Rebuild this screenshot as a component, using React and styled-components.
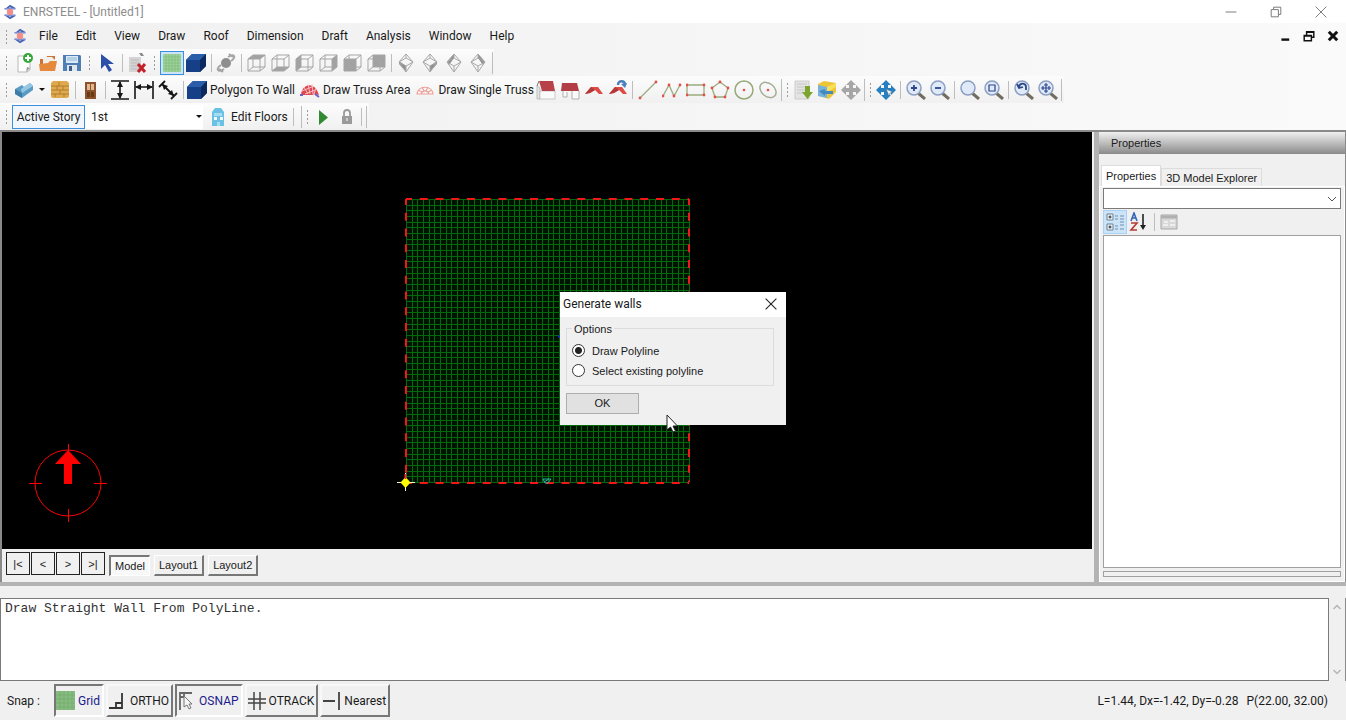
import React, { useState } from 'react';
import styled, { createGlobalStyle } from 'styled-components';

const MENUS = ['File', 'Edit', 'View', 'Draw', 'Roof', 'Dimension', 'Draft', 'Analysis', 'Window', 'Help'];

const CUBE_FACES = [
  ['Top view', '2,6 7,2 19,2 14,6'],
  ['Bottom view', '2,18 7,14 19,14 14,18'],
  ['Left view', '2,6 7,2 7,14 2,18'],
  ['Right view', '14,6 19,2 19,14 14,18'],
  ['Front view', '2,6 14,6 14,18 2,18'],
  ['Back view', '7,2 19,2 19,14 7,14'],
];

const ISO_FACES = [
  ['South west view', '3,8 10,13 10,19 3,11'],
  ['South east view', '17,8 10,13 10,19 17,11'],
  ['North west view', '3,9 10,1 10,5 5,12'],
  ['North east view', '17,9 10,1 10,5 15,12'],
];

const GRID_START = 9;
const GRID_SIZE = 283;
const GRID_CELLS = 50;

export default function App() {
  const [option, setOption] = useState('draw');

  return (
    <WindowStyled>
      <GlobalStyle />
      <TitleBarStyled>
        <LogoIcon />
        <TitleStyled>ENRSTEEL - [Untitled1]</TitleStyled>
        <CaptionButtonStyled aria-label="Minimize">
          <Icon size={12}>
            <path d="M1 10h18" stroke="#777" strokeWidth="1.6" />
          </Icon>
        </CaptionButtonStyled>
        <CaptionButtonStyled aria-label="Restore">
          <Icon size={12}>
            <path d="M2 6h12v12H2zM6 6V2h12v12h-4" fill="none" stroke="#777" strokeWidth="1.6" />
          </Icon>
        </CaptionButtonStyled>
        <CaptionButtonStyled aria-label="Close">
          <Icon size={12}>
            <path d="M1 1l18 18M19 1L1 19" stroke="#777" strokeWidth="1.6" />
          </Icon>
        </CaptionButtonStyled>
      </TitleBarStyled>

      <MenuBarStyled>
        <GripStyled />
        <LogoIcon />
        <MenuItemsStyled>
          {MENUS.map((menu) => (
            <MenuButtonStyled key={menu}>{menu}</MenuButtonStyled>
          ))}
        </MenuItemsStyled>
        <ChildButtonStyled aria-label="Minimize drawing">
          <Icon size={12}>
            <path d="M4 16h13" stroke="#111" strokeWidth="4" />
          </Icon>
        </ChildButtonStyled>
        <ChildButtonStyled aria-label="Restore drawing">
          <Icon size={12}>
            <path d="M2 9h12v9H2zM6 9V3h12v9h-4M2 10h12M6 4h12" fill="none" stroke="#111" strokeWidth="2.4" />
          </Icon>
        </ChildButtonStyled>
        <ChildButtonStyled aria-label="Close drawing">
          <Icon size={12}>
            <path d="M3 3l14 14M17 3L3 17" stroke="#111" strokeWidth="5" />
          </Icon>
        </ChildButtonStyled>
      </MenuBarStyled>

      <ToolbarRowStyled>
        <ToolbarStyled>
          <GripStyled />
          <Tool label="New">
            <path d="M4 3h9l3 4v10l-3 2H4z" fill="#fdfdfd" stroke="#b8b8b8" />
            <path d="M12 19l1-5 3 1z" fill="#999" />
            <circle cx="14" cy="5" r="5" fill="#35a83a" />
            <path d="M14 2v6M11 5h6" stroke="#fff" strokeWidth="2" />
          </Tool>
          <Tool label="Open">
            <path d="M2 6h6l1-3h8v12H2z" fill="#c9743d" />
            <path d="M5 4h9l3 3v5H5z" fill="#f3efe9" />
            <path d="M1 11l9-1 2-2h7l-2 10H2z" fill="#e58a3c" />
          </Tool>
          <Tool label="Save">
            <path d="M1 2h17l1 1v15H1z" fill="#4f7eb5" />
            <path d="M4 3h12v7H4z" fill="#d9ebf7" />
            <path d="M5 5h10M5 7h10" stroke="#8bb5d5" />
            <path d="M5 12h10v6H5z" fill="#dfe6ec" />
            <path d="M7 13h3v5H7z" fill="#3a5f8e" />
          </Tool>
          <GripStyled $width={11} />
          <Tool label="Select">
            <path d="M4 1v15l4-4 4 7 3-2-4-6h6z" fill="#2c4fa8" />
          </Tool>
          <SeparatorStyled />
          <Tool label="Delete">
            <path d="M2 4h12v15H2z" fill="#d4d4d4" />
            <path d="M4 7h8M4 10h8M4 13h8M4 16h8" stroke="#bbb" />
            <path d="M12 0h3l2 3h-3z" fill="#888" />
            <path d="M11 11l7 8M18 11l-7 8" stroke="#c4202a" strokeWidth="3" />
          </Tool>
          <GripStyled $width={11} />
          <Tool label="Grid" active>
            <path d="M1 1h18v18H1z" fill="#9fd39b" />
            <path d="M4 1v18M7 1v18M10 1v18M13 1v18M16 1v18M1 4h18M1 7h18M1 10h18M1 13h18M1 16h18" stroke="#7eba7d" strokeWidth="0.7" />
          </Tool>
          <Tool label="Shaded">
            <Solid />
          </Tool>
          <SeparatorStyled />
          <Tool label="Orbit">
            <circle cx="10" cy="10" r="5" fill="#8e8e8e" />
            <path d="M5 12c-6 4-3 8 3 4M15 8c6-4 3-8-3-4M3 16l4 3M17 4l-4-3" fill="none" stroke="#a4a4a4" strokeWidth="2" />
          </Tool>
          <SeparatorStyled />
          {CUBE_FACES.map(([label, face]) => (
            <Tool key={label} label={label}>
              <polygon points={face} fill="#a2a2a2" />
              <path d="M2 6h12v12H2zM2 6l5-4h12v12l-5 4M14 6l5-4M7 2v12h12M7 14l-5 4" fill="none" stroke="#a5a5a5" />
            </Tool>
          ))}
          <SeparatorStyled />
          {ISO_FACES.map(([label, face]) => (
            <Tool key={label} label={label}>
              <polygon points={face} fill="#8e8e8e" />
              <path d="M10 1l7 8-7 10-7-10zM3 9l7 4 7-4M10 1v4L3 9M10 5l7 4M10 13v6" fill="none" stroke="#a8a8a8" />
            </Tool>
          ))}
          <SeparatorStyled $end />
        </ToolbarStyled>
      </ToolbarRowStyled>

      <ToolbarRowStyled>
        <ToolbarStyled>
          <GripStyled />
          <Tool label="Wall">
            <path d="M1 9l7-4 2 2 6-4 3 3v4L8 18l-7-4z" fill="#5a9bc4" />
            <path d="M1 9l7 4v5l-7-4z" fill="#3e7ca8" />
            <path d="M8 13l11-7-3-3-9 6z" fill="#94c8e3" />
          </Tool>
          <CaretButtonStyled aria-label="Wall types">
            <CaretStyled />
          </CaretButtonStyled>
          <Tool label="Brick wall">
            <path d="M1 3l2-2h14l2 2v14l-2 1H3l-2-1z" fill="#dfa94d" />
            <path d="M1 6h18M1 10h18M1 14h18M7 6v4M13 6v4M10 10v4M5 14v3M14 14v3M9 2v4" stroke="#a8742a" strokeWidth="0.8" />
          </Tool>
          <SeparatorStyled />
          <Tool label="Door">
            <path d="M5 2h11v17H5z" fill="#8b532d" />
            <path d="M7 4h3v6H7zM11 4h3v6h-3z" fill="#e2b98e" />
            <path d="M7 12h3v5H7zM11 12h3v5h-3z" fill="#693916" />
          </Tool>
          <SeparatorStyled />
          <Tool label="Vertical dimension">
            <path d="M1 1h18M1 19h18M10 2v16" stroke="#161616" strokeWidth="1.6" />
            <path d="M10 1l-3 6h6zM10 19l-3-6h6z" fill="#161616" />
          </Tool>
          <Tool label="Horizontal dimension">
            <path d="M1 1v18M19 1v18M2 7h16" stroke="#161616" strokeWidth="1.6" />
            <path d="M1 7l6-3v6zM19 7l-6-3v6z" fill="#161616" />
          </Tool>
          <Tool label="Aligned dimension">
            <path d="M1 7l6-6M13 19l6-6M4 4l12 12" stroke="#161616" strokeWidth="1.8" />
            <path d="M4 4l6 2-4 4zM16 16l-6-2 4-4z" fill="#161616" />
          </Tool>
          <SeparatorStyled />
          <TextToolStyled>
            <Icon>
              <Solid />
            </Icon>
            Polygon To Wall
          </TextToolStyled>
          <TextToolStyled $spaced>
            <Icon>
              <Truss />
            </Icon>
            Draw Truss Area
          </TextToolStyled>
          <TextToolStyled $spaced>
            <Icon>
              <SmallTruss />
            </Icon>
            Draw Single Truss
          </TextToolStyled>
          <Tool label="Gable roof">
            <path d="M4 8v11H1V6z" fill="#e8e6e4" stroke="#aaa" strokeWidth="0.7" />
            <path d="M4 11h15v8H4z" fill="#fafafa" stroke="#b5b5b5" strokeWidth="0.7" />
            <path d="M3 1h14l2 10H6z" fill="#b74249" />
            <path d="M3 1L1 6" stroke="#777" />
          </Tool>
          <Tool label="Porch roof">
            <path d="M3 10v7h4v-5M12 11v8h7v-8" fill="#fafafa" stroke="#b0b0b0" />
            <path d="M2 3h15l2 8H1z" fill="#b23d45" />
          </Tool>
          <Tool label="Hip roof">
            <RoofShape />
          </Tool>
          <Tool label="Update roof">
            <RoofShape />
            <path d="M10 5c0-5 7-5 7 0" fill="none" stroke="#4c7fbd" strokeWidth="2.4" />
            <path d="M13 4l6-1-2 5z" fill="#4c7fbd" />
          </Tool>
          <SeparatorStyled />
          <Shape label="Line" points={[[2, 18], [18, 2]]} />
          <Shape label="Polyline" points={[[1, 16], [7, 5], [12, 16], [18, 5]]} />
          <Shape label="Rectangle" points={[[1, 5], [18, 5], [18, 15], [1, 15]]} closed />
          <Shape label="Polygon" points={[[10, 2], [18, 8], [15, 17], [5, 17], [2, 8]]} closed />
          <Tool label="Circle">
            <circle cx="10" cy="10" r="9" fill="none" stroke="#96aa79" strokeWidth="1.5" />
            <circle cx="10" cy="10" r="1.3" fill="#df5349" />
          </Tool>
          <Tool label="Ellipse">
            <ellipse cx="10" cy="10" rx="9" ry="6.5" transform="rotate(40 10 10)" fill="none" stroke="#a3ae95" strokeWidth="1.5" />
            <circle cx="10" cy="10" r="1.3" fill="#df5349" />
          </Tool>
          <SeparatorStyled $end />
          <GripStyled $width={7} />
          <Tool label="Import">
            <path d="M2 1h14v18H2z" fill="#e4e5e3" stroke="#bdbdbd" strokeWidth="0.7" />
            <path d="M4 4h10M4 7h10M4 10h10M4 13h10" stroke="#c6c6c6" />
            <path d="M12 6h5v6h3l-5.5 7L9 12h3z" fill="#7ca52d" />
          </Tool>
          <Tool label="Layers">
            <path d="M1 4l6-3 12 2v9l-7 7-10-3z" fill="#edc637" />
            <path d="M1 5l9 2v11l-9-2z" fill="#75b3db" />
            <path d="M10 7l9-4v4l-9 5z" fill="#f8df5d" />
            <path d="M2 11l6-2v2h8v3H8v2z" fill="#4689bf" />
          </Tool>
          <Tool label="Move">
            <MoveShape colour="#a6a6a6" />
          </Tool>
          <SeparatorStyled $end />
          <GripStyled $width={7} />
          <Tool label="Pan">
            <MoveShape colour="#267fc1" />
            <path d="M10 9l7 3-3 1-1 3z" fill="#eaf5fc" stroke="#4a6a85" strokeWidth="0.6" />
          </Tool>
          <SeparatorStyled />
          <ZoomTool label="Zoom in" mark="M5 8h6M8 5v6" />
          <ZoomTool label="Zoom out" mark="M5 8h6" />
          <SeparatorStyled />
          <ZoomTool label="Zoom" mark="" />
          <ZoomTool label="Zoom window" mark="M5 5h6v6H5z" thin />
          <SeparatorStyled />
          <ZoomTool label="Zoom previous" mark="M5 7c1-5 7-4 7 0v3M3 4l2 4 4-1" />
          <ZoomTool label="Zoom extents" mark="M8 3v10M3 8h10M6 5h4M6 11h4M5 6v4M11 6v4" thin />
          <SeparatorStyled $end />
        </ToolbarStyled>
      </ToolbarRowStyled>

      <ToolbarRowStyled>
        <ToolbarStyled>
          <GripStyled />
          <StoryButtonStyled>Active Story</StoryButtonStyled>
          <StoryFieldStyled>
            <StorySelectStyled aria-label="Active story" defaultValue="1st">
              <option>1st</option>
            </StorySelectStyled>
            <CaretStyled />
          </StoryFieldStyled>
          <TextToolStyled $spaced>
            <Icon>
              <path d="M4 5l3-4h6l3 4v14H4z" fill="#6bc1e3" />
              <path d="M6 6h8v3H6z" fill="#a5def2" />
              <path d="M6 10h3v3H6zM12 10h3v3h-3z" fill="#f4fbfd" />
              <path d="M9 15h3v4H9z" fill="#a5def2" />
            </Icon>
            Edit Floors
          </TextToolStyled>
          <SeparatorStyled $wide />
          <SeparatorStyled $end />
          <GripStyled $width={7} />
          <Tool label="Run">
            <path d="M6 3l9 7.5L6 18z" fill="#2f8a31" />
          </Tool>
          <Tool label="Lock">
            <path d="M7 10V6c0-4 6-4 6 0v4" fill="none" stroke="#9a9a9a" strokeWidth="1.8" />
            <path d="M5 9h10v8H5z" fill="#9a9a9a" />
            <path d="M10 11v3" stroke="#ddd" strokeWidth="1.5" />
          </Tool>
          <SeparatorStyled />
          <SeparatorStyled $end />
        </ToolbarStyled>
      </ToolbarRowStyled>

      <WorkspaceStyled>
        <DrawingPaneStyled>
          <CanvasStyled>
            <SiteGrid />
            <NorthStyled viewBox="0 0 80 80" aria-label="North">
              <circle cx="40" cy="40" r="33" fill="none" stroke="red" />
              <path d="M40.5 1v13M40.5 66v13M1 40.5h13M66 40.5h13" stroke="red" />
              <path d="M40 7l13 14h-9v20h-8V21h-9z" fill="red" />
            </NorthStyled>
          </CanvasStyled>
          <SheetTabsStyled>
            <SheetNavStyled>
              {['|<', '<', '>', '>|'].map((sign) => (
                <SheetNavButtonStyled key={sign}>{sign}</SheetNavButtonStyled>
              ))}
            </SheetNavStyled>
            {['Model', 'Layout1', 'Layout2'].map((sheet) => (
              <SheetTabStyled key={sheet} $active={sheet === 'Model'}>
                {sheet}
              </SheetTabStyled>
            ))}
          </SheetTabsStyled>
        </DrawingPaneStyled>

        <PropertiesStyled>
          <PanelTitleStyled>Properties</PanelTitleStyled>
          <PanelTabsStyled>
            <PanelTabStyled $active>Properties</PanelTabStyled>
            <PanelTabStyled>3D Model Explorer</PanelTabStyled>
          </PanelTabsStyled>
          <PanelBodyStyled>
            <ObjectFieldStyled>
              <ObjectSelectStyled aria-label="Selected object" />
              <Icon size={10}>
                <path d="M2 6l8 8 8-8" fill="none" stroke="#555" strokeWidth="2" />
              </Icon>
            </ObjectFieldStyled>
            <PanelToolsStyled>
              <Tool label="Categorized" active soft>
                <path d="M2 2h6v6H2zM2 12h6v6H2z" fill="#eef5fb" stroke="#6b8095" />
                <path d="M3.5 5h3M5 3.5v3M3.5 15h3M5 13.5v3" stroke="#222" />
                <path d="M10 4h3M10 7h3M10 14h3M10 17h3M15 4h4M15 7h4M15 10h4M15 13h4M15 17h4" stroke="#7191ae" />
              </Tool>
              <Tool label="Alphabetical">
                <path d="M2 9l3-8 3 8M3 6h4" fill="none" stroke="#3464b4" strokeWidth="1.6" />
                <path d="M2 11h6l-6 7h6" fill="none" stroke="#b33a35" strokeWidth="1.6" />
                <path d="M14 2v12" stroke="#222" strokeWidth="1.6" />
                <path d="M11 13h6l-3 5z" fill="#222" />
              </Tool>
              <SeparatorStyled />
              <Tool label="Property pages">
                <path d="M2 3h16v14H2z" fill="#d8d8d8" stroke="#a8a8a8" />
                <path d="M2 5h16" stroke="#b0b0b0" strokeWidth="3" />
                <path d="M5 10h4M11 9h5M4 13h5M11 13h5" stroke="#f5f5f5" strokeWidth="1.5" />
              </Tool>
            </PanelToolsStyled>
            <PropertyListStyled />
            <PropertyHelpStyled />
          </PanelBodyStyled>
        </PropertiesStyled>
      </WorkspaceStyled>

      <CommandPaneStyled>
        <CommandTextStyled aria-label="Command history" readOnly value="Draw Straight Wall From PolyLine." />
        <ScrollBarStyled>
          <Icon size={10}>
            <path d="M3 14l7-7 7 7" fill="none" stroke="#b5b5b5" strokeWidth="3" />
          </Icon>
          <Icon size={10}>
            <path d="M3 6l7 7 7-7" fill="none" stroke="#b5b5b5" strokeWidth="3" />
          </Icon>
        </ScrollBarStyled>
      </CommandPaneStyled>

      <StatusBarStyled>
        <SnapLabelStyled>Snap :</SnapLabelStyled>
        <SnapButtonStyled $active>
          <Icon>
            <path d="M0 0h19v19H0z" fill="#85bd80" />
            <path d="M4 0v19M8 0v19M12 0v19M16 0v19M0 4h19M0 8h19M0 12h19M0 16h19" stroke="#78ad73" />
          </Icon>
          Grid
        </SnapButtonStyled>
        <SnapButtonStyled>
          <Icon>
            <path d="M14 2v16M1 17h13M8 17v-5h6" fill="none" stroke="#333" strokeWidth="1.8" />
          </Icon>
          ORTHO
        </SnapButtonStyled>
        <SnapButtonStyled $active>
          <Icon>
            <path d="M3 19V2h12M3 6h4V2" fill="none" stroke="#666" strokeWidth="1.8" />
            <path d="M7 5v11l3-2 2 4 2-1-2-4h3z" fill="#f5f5f5" stroke="#777" />
          </Icon>
          OSNAP
        </SnapButtonStyled>
        <SnapButtonStyled>
          <Icon>
            <path d="M7 1v18M13 1v18M1 8h18M1 12h18" stroke="#444" strokeWidth="1.5" />
          </Icon>
          OTRACK
        </SnapButtonStyled>
        <SnapButtonStyled>
          <Icon>
            <path d="M1 10h12M17 1v18" stroke="#444" strokeWidth="1.8" />
          </Icon>
          Nearest
        </SnapButtonStyled>
        <CoordinatesStyled>
          <span>L=1.44, Dx=-1.42, Dy=-0.28</span>
          <span>P(22.00, 32.00)</span>
        </CoordinatesStyled>
      </StatusBarStyled>

      <DialogLayerStyled>
        <DialogStyled role="dialog" aria-labelledby="dialog-title">
          <DialogHeaderStyled>
            <span id="dialog-title">Generate walls</span>
            <DialogCloseStyled aria-label="Close dialog">
              <Icon size={12}>
                <path d="M1 1l18 18M19 1L1 19" stroke="#222" strokeWidth="1.8" />
              </Icon>
            </DialogCloseStyled>
          </DialogHeaderStyled>
          <DialogBodyStyled>
            <OptionsStyled>
              <legend>Options</legend>
              <OptionStyled>
                <RadioStyled name="wall" checked={option === 'draw'} onChange={() => setOption('draw')} />
                Draw Polyline
              </OptionStyled>
              <OptionStyled>
                <RadioStyled name="wall" checked={option === 'select'} onChange={() => setOption('select')} />
                Select existing polyline
              </OptionStyled>
            </OptionsStyled>
            <OkButtonStyled>OK</OkButtonStyled>
          </DialogBodyStyled>
          <PointerStyled viewBox="0 0 12 19">
            <path d="M1 1v15l3.5-3 2.5 5 2.5-1-2.5-5h4.5z" fill="#fff" stroke="#222" />
          </PointerStyled>
        </DialogStyled>
      </DialogLayerStyled>
    </WindowStyled>
  );
}

function Icon({ size = 20, children }) {
  return (
    <IconStyled viewBox="0 0 20 20" width={size} height={size} aria-hidden="true">
      {children}
    </IconStyled>
  );
}

function Tool({ label, active, soft, children }) {
  return (
    <ToolStyled aria-label={label} $active={active} $soft={soft}>
      <Icon>{children}</Icon>
    </ToolStyled>
  );
}

function LogoIcon() {
  return (
    <Icon size={16}>
      <path d="M4 6l6-5 7 4-2 2-5-3-4 3zM3 14l2-1 5 3 5-3 2 2-7 4z" fill="#4b65b8" />
      <path d="M3 5h14v2H3zM3 13h14v2H3z" fill="#7d8fd3" />
      <circle cx="10" cy="10" r="4" fill="#f28e88" />
    </Icon>
  );
}

function Solid() {
  return (
    <>
      <path d="M0 7l6-6h14v12l-6 6H0z" fill="#153f86" />
      <path d="M0 7l6-6h14l-6 6z" fill="#2a5ea9" />
      <path d="M14 7l6-6v12l-6 6z" fill="#0c2a5f" />
    </>
  );
}

function Truss() {
  return (
    <>
      <path d="M1 15C2 3 15 1 19 15l-4-1-3 1H5z" fill="#df4550" />
      <path d="M4 7l4 7M8 4l2 10M12 4l1 10M16 8l-2 6M2 11l12-5M5 14l10-4" stroke="#f7c9c9" strokeWidth="0.9" />
      <path d="M0 15h3M15 14l4 3" stroke="#6a62c8" strokeWidth="2" />
    </>
  );
}

function SmallTruss() {
  return (
    <path
      d="M2 14C3 5 17 5 18 14zM6 14c1-4 7-4 8 0M3 10l4 2M7 7l2 4M13 7l-2 4M17 10l-4 2"
      fill="none"
      stroke="#efa09a"
      strokeWidth="1.2"
    />
  );
}

function RoofShape() {
  return (
    <>
      <path d="M1 14l6-7h7l5 7h-4l-4-4-5 3z" fill="#dc4b45" />
      <path d="M7 7l4 3-5 3-5 1z" fill="#b23a39" />
    </>
  );
}

function MoveShape({ colour }) {
  return <path d="M10 0l5 5h-3v3h3V5l5 5-5 5v-3h-3v3h3l-5 5-5-5h3v-3H5v3l-5-5 5-5v3h3V5H5z" fill={colour} />;
}

function Shape({ label, points, closed }) {
  const Line = closed ? 'polygon' : 'polyline';
  return (
    <Tool label={label}>
      <Line points={points.join(' ')} fill="none" stroke="#9bac7f" strokeWidth="1.3" />
      {points.map(([x, y]) => (
        <circle key={x + '-' + y} cx={x} cy={y} r="1.4" fill="#e2504a" />
      ))}
    </Tool>
  );
}

function ZoomTool({ label, mark, thin }) {
  return (
    <Tool label={label}>
      <path d="M12 13l7 6" stroke="#716c5e" strokeWidth="3" />
      <circle cx="8" cy="8" r="7" fill="#dfe9f8" stroke="#8c9fc2" strokeWidth="1.5" />
      <path d={mark} fill="none" stroke="#2c478c" strokeWidth={thin ? 1.2 : 1.8} />
    </Tool>
  );
}

function SiteGrid() {
  const end = GRID_START + GRID_SIZE;
  const lines = [];
  for (let i = 0; i <= GRID_CELLS; i++) {
    const at = Math.round(GRID_START + (i * GRID_SIZE) / GRID_CELLS) + 0.5;
    lines.push(`M${at} ${GRID_START}V${end}M${GRID_START} ${at}H${end}`);
  }

  return (
    <SiteGridStyled viewBox="0 0 300 301" aria-label="Site grid">
      <rect x={GRID_START} y={GRID_START} width={GRID_SIZE} height={GRID_SIZE} fill="#001200" />
      <path d={lines.join('')} stroke="#006a0c" />
      <path
        d={`M${GRID_START} ${GRID_START}H${end}M${GRID_START} ${end + 1}H${end}M${GRID_START} ${GRID_START}V${end}M${end} ${GRID_START}V${end}`}
        stroke="#f01818"
        strokeWidth="2"
        strokeDasharray="8 7.75"
        strokeDashoffset="2"
      />
      <path d="M161 146.5h5" stroke="#2020d0" strokeWidth="2" />
      <path d="M146 289h8l-3 4h-3zM147 292l5-3" fill="none" stroke="#25b5a5" />
      <path d="M8.5 283v18M0 292.5h18" stroke="#f4f4d0" />
      <path d="M8.5 287l5 5.5-5 5.5-5-5.5z" fill="#ff0" />
      <path d="M8.5 284v5" stroke="#e33" strokeWidth="2" />
    </SiteGridStyled>
  );
}

const GlobalStyle = createGlobalStyle`
  * {
    box-sizing: border-box;
  }

  body {
    margin: 0;
    background-color: #f0f0f0;
    color: #1a1a1a;
    font: 12px/16px Roboto, 'Noto Sans', sans-serif;
  }

  button,
  select,
  input {
    margin: 0;
    padding: 0;
    border: 0;
    background: none;
    color: inherit;
    font: inherit;
    white-space: nowrap;
  }
`;

const WindowStyled = styled.div`
  display: flex;
  flex-direction: column;
  min-height: 100vh;
  background: linear-gradient(to right, #f0f0f0, #fafafa);
`;

const IconStyled = styled.svg`
  display: block;
  flex: none;
`;

const TitleBarStyled = styled.header`
  display: flex;
  align-items: center;
  height: 23px;
  padding-left: 2px;
  background-color: #fff;
  color: #8c8c8c;
`;

const TitleStyled = styled.span`
  flex: 1;
  padding-left: 5px;
`;

const CaptionButtonStyled = styled.button`
  display: grid;
  place-items: center;
  width: 45px;
  height: 20px;

  &:last-child {
    margin-right: 3px;
  }
`;

const MenuBarStyled = styled.nav`
  display: flex;
  align-items: center;
  height: 26px;
  padding-right: 1px;
`;

const MenuItemsStyled = styled.div`
  display: flex;
  flex: 1;
  padding-left: 2px;
`;

const MenuButtonStyled = styled.button`
  padding: 0 9px;
`;

const ChildButtonStyled = styled.button`
  display: grid;
  place-items: center;
  width: 24px;
  height: 20px;
`;

const ToolbarRowStyled = styled.div`
  display: flex;
  height: 27px;
`;

const ToolbarStyled = styled.div`
  display: flex;
  align-items: center;
  background: linear-gradient(#fcfcfc, #f0f0f0);
`;

const GripStyled = styled.span`
  flex: none;
  width: ${({ $width = 12 }) => $width}px;
  height: 15px;
  background: radial-gradient(circle, #9c9c9c 1px, transparent 1px) center 0 / 3px 4px repeat-y;
`;

const SeparatorStyled = styled.span`
  flex: none;
  width: ${({ $end, $wide }) => ($end ? '4px' : $wide ? '12px' : '6px')};
  height: ${({ $end }) => ($end ? '22px' : '18px')};
  background: linear-gradient(#bdbdbd, #bdbdbd) center / 1px 100% no-repeat;
`;

const ToolStyled = styled.button`
  display: grid;
  flex: none;
  place-items: center;
  width: 24px;
  height: 24px;
  outline: ${({ $active, $soft }) => ($active ? `1px solid ${$soft ? '#a9d1f5' : '#3c8fdc'}` : '0')};
  outline-offset: -1px;
  background-color: ${({ $active }) => ($active ? '#cce4f8' : 'transparent')};
`;

const TextToolStyled = styled.button`
  display: flex;
  align-items: center;
  gap: 3px;
  height: 24px;
  padding-left: ${({ $spaced }) => ($spaced ? '5px' : '1px')};
`;

const CaretButtonStyled = styled.button`
  display: grid;
  place-items: center;
  width: 12px;
  height: 24px;
`;

const CaretStyled = styled.span`
  border: 3px solid transparent;
  border-top-color: #111;
  border-bottom: 0;
  pointer-events: none;
`;

const StoryButtonStyled = styled.button`
  width: 73px;
  height: 24px;
  border: 1px solid #3c8fdc;
  background-color: #f0f6fc;
`;

const StoryFieldStyled = styled.div`
  display: flex;
  align-items: center;
  width: 118px;
  height: 24px;
  padding: 0 1px 0 6px;
  background-color: #fff;
`;

const StorySelectStyled = styled.select`
  flex: 1;
  appearance: none;
`;

const WorkspaceStyled = styled.main`
  display: flex;
  flex: 1;
  border-top: 2px solid #8a8a8a;
  border-bottom: 4px solid #b3b3b3;
  background-color: #f0f0f0;
`;

const DrawingPaneStyled = styled.section`
  display: flex;
  flex: 1;
  flex-direction: column;
  min-width: 0;
  border-left: 2px solid #8a8a8a;
`;

const CanvasStyled = styled.div`
  position: relative;
  display: grid;
  flex: 1;
  place-items: center;
  margin-right: 2px;
  background-color: #000;
`;

const SiteGridStyled = styled.svg`
  width: 300px;
  height: 301px;
`;

const NorthStyled = styled.svg`
  position: absolute;
  bottom: 26px;
  left: 26px;
  width: 80px;
  height: 80px;
`;

const SheetTabsStyled = styled.div`
  display: flex;
  align-items: flex-start;
  gap: 4px;
  height: 33px;
  padding: 3px 4px;
  font: 11px/16px 'Liberation Sans', sans-serif;
`;

const SheetNavStyled = styled.div`
  display: flex;
  gap: 1px;
`;

const SheetNavButtonStyled = styled.button`
  width: 24px;
  height: 23px;
  border: 1px solid #222;
`;

const SheetTabStyled = styled.button`
  height: 21px;
  margin-top: 3px;
  padding: 0 4px;
  border: 1px solid;
  border-color: ${({ $active }) => ($active ? '#777 #fff #fff #777' : '#fff #777 #777 #fff')};
  border-width: ${({ $active }) => ($active ? '2px 1px 1px 2px' : '1px 2px 2px 1px')};
  background-color: ${({ $active }) => ($active ? '#f8f8f8' : '#f0f0f0')};
`;

const PropertiesStyled = styled.aside`
  display: flex;
  flex-direction: column;
  width: 252px;
  border-right: 1px solid #8a8a8a;
  border-left: 5px solid #b3b3b3;
  font: 11px/16px 'Liberation Sans', sans-serif;
`;

const PanelTitleStyled = styled.h2`
  margin: 0;
  padding: 3px 12px;
  background: linear-gradient(#f0f0f0, #8a8a8a);
  font: inherit;
`;

const PanelTabsStyled = styled.div`
  display: flex;
  align-items: flex-end;
  height: 32px;
  padding-left: 2px;
`;

const PanelTabStyled = styled.button`
  height: ${({ $active }) => ($active ? '21px' : '18px')};
  padding: 0 4px;
  border: 1px solid #dcdcdc;
  border-bottom: 0;
  background-color: ${({ $active }) => ($active ? '#fff' : '#f0f0f0')};
`;

const PanelBodyStyled = styled.div`
  display: flex;
  flex: 1;
  flex-direction: column;
  padding: 1px 3px 4px;
  border: 1px solid #fff;
`;

const ObjectFieldStyled = styled.div`
  display: flex;
  align-items: center;
  height: 21px;
  padding: 0 3px;
  border: 1px solid #7a7a7a;
  background-color: #fff;
`;

const ObjectSelectStyled = styled.select`
  flex: 1;
  appearance: none;
`;

const PanelToolsStyled = styled.div`
  display: flex;
  align-items: center;
  height: 26px;
`;

const PropertyListStyled = styled.div`
  flex: 1;
  border: 1px solid #a0a0a0;
  background-color: #fff;
`;

const PropertyHelpStyled = styled.div`
  height: 6px;
  margin-top: 3px;
  border: 1px solid #a0a0a0;
`;

const CommandPaneStyled = styled.section`
  display: flex;
  height: 95px;
  padding-top: 12px;
  background-color: #f0f0f0;
`;

const CommandTextStyled = styled.textarea`
  flex: 1;
  margin: 0;
  padding: 2px 4px;
  border: 1px solid #7a7a7a;
  background-color: #fff;
  color: #333;
  font: 13px/16px 'Liberation Mono', monospace;
  resize: none;
`;

const ScrollBarStyled = styled.div`
  display: flex;
  flex-direction: column;
  align-items: center;
  justify-content: space-between;
  width: 17px;
  padding: 4px 0;
  border-right: 1px solid #8a8a8a;
`;

const StatusBarStyled = styled.footer`
  display: flex;
  align-items: center;
  gap: 2px;
  height: 39px;
  padding: 0 18px 0 7px;
  background-color: #f0f0f0;
`;

const SnapLabelStyled = styled.span`
  width: 45px;
`;

const SnapButtonStyled = styled.button`
  display: flex;
  align-items: center;
  gap: 2px;
  height: 33px;
  padding: 0 2px 0 0;
  border: 2px solid;
  border-color: ${({ $active }) => ($active ? '#777 #fff #fff #777' : '#f8f8f8 #777 #777 #f8f8f8')};
  color: ${({ $active }) => ($active ? '#1c1c8c' : 'inherit')};
`;

const CoordinatesStyled = styled.div`
  display: flex;
  gap: 8px;
  margin-left: auto;
`;

const DialogLayerStyled = styled.div`
  position: fixed;
  inset: 0 0 4px;
  display: grid;
  place-items: center;
  pointer-events: none;
`;

const DialogStyled = styled.section`
  position: relative;
  width: 226px;
  background-color: #f0f0f0;
  font: 11px/16px 'Liberation Sans', sans-serif;
  pointer-events: auto;
`;

const DialogHeaderStyled = styled.header`
  display: flex;
  align-items: center;
  justify-content: space-between;
  height: 25px;
  padding: 0 9px 0 3px;
  background-color: #fff;
  font: 12px/16px Roboto, sans-serif;
`;

const DialogCloseStyled = styled.button`
  padding: 0;
`;

const DialogBodyStyled = styled.div`
  padding: 4px 12px 11px 6px;
`;

const OptionsStyled = styled.fieldset`
  display: grid;
  gap: 4px;
  margin: 0 0 7px;
  padding: 6px 5px;
  border: 1px solid #dcdcdc;

  legend {
    padding: 0 2px;
  }
`;

const OptionStyled = styled.label`
  display: flex;
  align-items: center;
  gap: 7px;
`;

const RadioStyled = styled.input.attrs({ type: 'radio' })`
  width: 13px;
  height: 13px;
  border: 1px solid #333;
  border-radius: 50%;
  appearance: none;
  background: ${({ checked }) => (checked ? 'radial-gradient(circle, #222 3px, #fff 4px)' : '#fff')};
`;

const OkButtonStyled = styled.button`
  display: block;
  width: 73px;
  height: 21px;
  border: 1px solid #adadad;
  background-color: #e1e1e1;
`;

const PointerStyled = styled.svg`
  position: absolute;
  bottom: -8px;
  left: 106px;
  width: 12px;
  height: 19px;
  pointer-events: none;
`;
